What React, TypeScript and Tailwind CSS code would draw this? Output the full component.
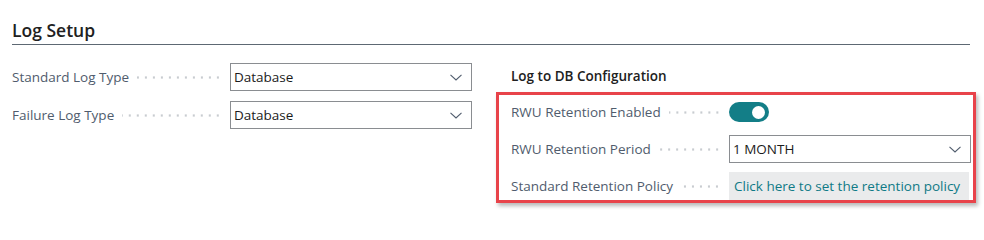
const font = { fontFamily: '"Segoe UI", "Open Sans", "Liberation Sans", sans-serif' };

function Leader() {
  return (
    <div className="flex-1 mx-2 h-[3px] bg-[radial-gradient(circle,#c8ccd0_1px,transparent_1.3px)] bg-[length:8px_3px] bg-repeat-x bg-right" />
  );
}

function Chevron() {
  return (
    <svg width="12" height="7" viewBox="0 0 12 7" fill="none">
      <path d="M0.5 0.8 L6 6 L11.5 0.8" stroke="#505c6d" strokeWidth="1.1" />
    </svg>
  );
}

function Select({ value }: { value: string }) {
  return (
    <div className="flex items-center justify-between h-[28px] border border-[#8a8d91] bg-white pl-[3px] pr-[9px] text-[13.5px] text-[#1b1b1b]">
      <span>{value}</span>
      <Chevron />
    </div>
  );
}

function Row({ label, children }: { label: string; children: React.ReactNode }) {
  return (
    <div className="flex items-center h-[28px]">
      <div className="flex items-center w-[218px]">
        <span className="text-[13.5px] text-[#505c6d] whitespace-nowrap">{label}</span>
        <Leader />
      </div>
      <div className="flex-1">{children}</div>
    </div>
  );
}

export default function App() {
  return (
    <div className="w-[984px] h-[210px] bg-white overflow-hidden" style={font}>
      <div className="ml-[12px] mr-[14px] pt-[19px] border-b border-[#5d6873] pb-[3px]">
        <h1 className="text-[17.5px] font-semibold text-[#212121] leading-[22px]">Log Setup</h1>
      </div>
      <div className="flex">
        <div className="ml-[12px] w-[460px] pt-[18px] flex flex-col gap-[10px]">
          <Row label="Standard Log Type">
            <Select value="Database" />
          </Row>
          <Row label="Failure Log Type">
            <Select value="Database" />
          </Row>
        </div>
        <div className="ml-[24px] w-[480px] pt-[22px]">
          <div className="pl-[15px] text-[13.5px] font-semibold text-[#212121] leading-[18px]">Log to DB Configuration</div>
          <div className="mt-[7px] border-[3px] border-[#e8434a] shadow-[2px_3px_4px_rgba(0,0,0,0.28)] pl-[12px] pr-[2px] pt-[3px] flex flex-col gap-[9px]">
            <Row label="RWU Retention Enabled">
              <div className="w-[40px] h-[20px] rounded-full bg-[#137e87] flex items-center justify-end pr-[4px]">
                <div className="w-[13px] h-[13px] rounded-full bg-white" />
              </div>
            </Row>
            <Row label="RWU Retention Period">
              <Select value="1 MONTH" />
            </Row>
            <Row label="Standard Retention Policy">
              <div className="h-[28px] bg-[#eaebec] mr-[2px] pl-[5px] flex items-center text-[13.5px] text-[#0f7a86] whitespace-nowrap">
                Click here to set the retention policy
              </div>
            </Row>
          </div>
        </div>
      </div>
    </div>
  );
}
